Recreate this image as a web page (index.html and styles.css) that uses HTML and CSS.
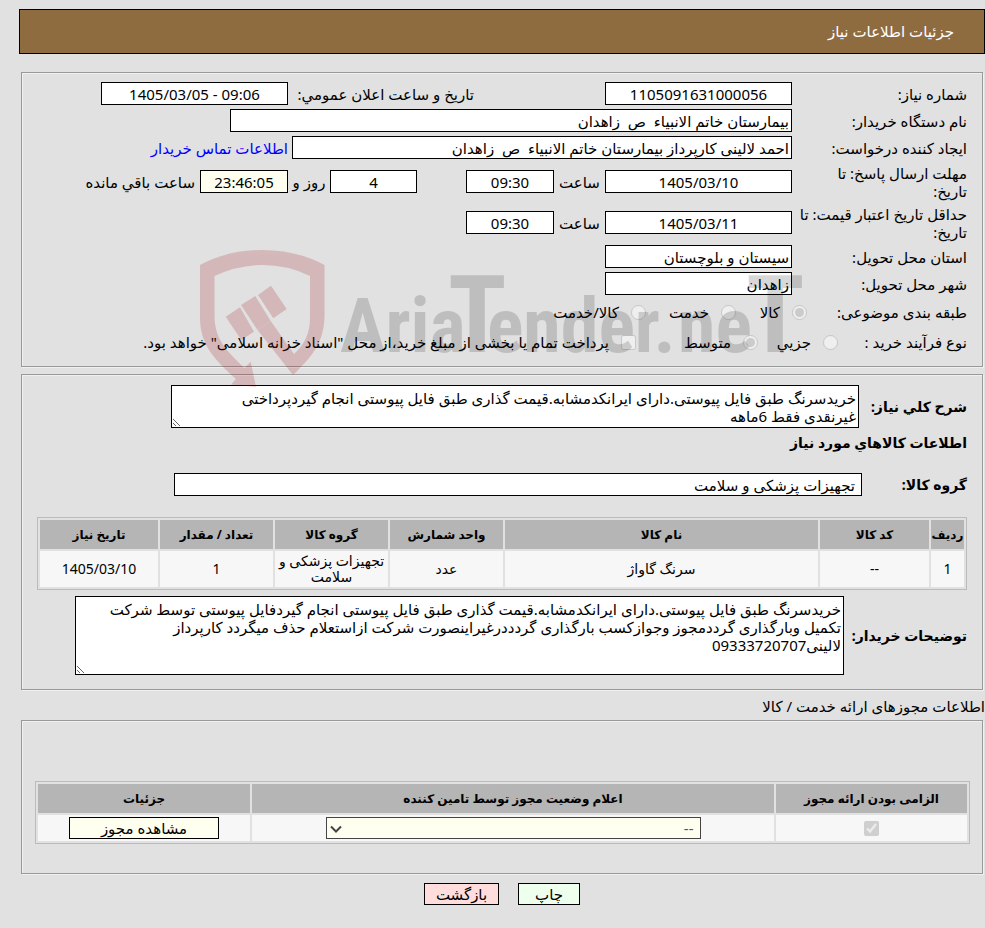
FILE: index.html
```
<!DOCTYPE html>
<html lang="fa" dir="rtl">
<head>
    <meta charset="UTF-8">
    <meta name="viewport" content="width=device-width, initial-scale=1.0">
    <title>جزئیات اطلاعات نیاز</title>
    <link rel="stylesheet" href="styles.css">
</head>
<body>
    <svg class="watermark" viewBox="180 235 640 160" aria-hidden="true">
        <g class="mark-red">
            <path d="M200 265 Q228 250 262 250 Q297 250 324.500 265 V315 C324.500 342 312 357 293 375 L257.500 330 L270.700 321 L294 354 C304 345 310 334 310 318 V276 Q288 265 262 265 Q238 265 214.500 276 V317 C215 341 229 353 244.500 368 L250.700 361.700 L256 387 L231 384.500 L236 379 C215 360 200 345 200 318 Z"/>
            <path d="M225.700 316.700 L240 307.300 L254 331.700 L241.300 340 Z M241 305 L255.300 296 L270.700 321 L257.500 330 Z M258 295 L271 285.700 L286.700 309 L273.300 318.300 Z"/>
        </g>
        <text class="mark-text" direction="ltr" x="340" y="352">Aria<tspan class="mark-big" x="448">T</tspan><tspan x="487">ender.</tspan><tspan x="678">ne</tspan><tspan class="mark-big" x="746">T</tspan></text>
    </svg>

    <div class="page">
        <h1 class="title">جزئیات اطلاعات نیاز</h1>

        <fieldset class="box info">
            <div class="row">
                <label class="name" for="number">شماره نیاز:</label>
                <input class="center w-date" id="number" value="1105091631000056" readonly>
                <label class="public" for="public">تاریخ و ساعت اعلان عمومي:</label>
                <input class="center w-date" id="public" value="1405/03/05 - 09:06" dir="ltr" readonly>
            </div>
            <div class="row">
                <label class="name" for="buyer">نام دستگاه خریدار:</label>
                <input class="w-buyer" id="buyer" value="بیمارستان خاتم الانبیاء  ص  زاهدان" readonly>
            </div>
            <div class="row">
                <label class="name" for="creator">ایجاد کننده درخواست:</label>
                <input class="w-creator" id="creator" value="احمد لالینی کارپرداز بیمارستان خاتم الانبیاء  ص  زاهدان" readonly>
                <a class="contact" href="#">اطلاعات تماس خریدار</a>
            </div>
            <div class="row two-line">
                <label class="name" for="reply-date">مهلت ارسال پاسخ: تا<br>تاریخ:</label>
                <input class="center w-date" id="reply-date" value="1405/03/10" readonly>
                <label class="hour" for="reply-hour">ساعت</label>
                <input class="center w-hour" id="reply-hour" value="09:30" readonly>
                <input class="center days" id="days" value="4" readonly>
                <label class="and" for="days">روز و</label>
                <input class="center w-hour cream" id="left" value="23:46:05" readonly>
                <label class="left" for="left">ساعت باقي مانده</label>
            </div>
            <div class="row two-line">
                <label class="name" for="price-date">حداقل تاریخ اعتبار قیمت: تا<br>تاریخ:</label>
                <input class="center w-date" id="price-date" value="1405/03/11" readonly>
                <label class="hour" for="price-hour">ساعت</label>
                <input class="center w-hour" id="price-hour" value="09:30" readonly>
            </div>
            <div class="row">
                <label class="name" for="province">استان محل تحویل:</label>
                <input class="w-date" id="province" value="سیستان و بلوچستان" readonly>
            </div>
            <div class="row">
                <label class="name" for="city">شهر محل تحویل:</label>
                <input class="w-date" id="city" value="زاهدان" readonly>
            </div>
            <div class="choices kinds">
                <span class="caption">طبقه بندی موضوعی:</span>
                <label><input type="radio" name="kind" checked disabled>کالا</label>
                <label><input type="radio" name="kind" disabled>خدمت</label>
                <label><input type="radio" name="kind" disabled>کالا/خدمت</label>
            </div>
            <div class="choices process">
                <span class="caption">نوع فرآیند خرید :</span>
                <label><input type="radio" name="process" disabled>جزیي</label>
                <label><input type="radio" name="process" checked disabled>متوسط</label>
                <label><input type="checkbox" disabled>پرداخت تمام یا بخشی از مبلغ خرید،از محل "اسناد خزانه اسلامی" خواهد بود.</label>
            </div>
        </fieldset>

        <fieldset class="box goods">
            <div class="row">
                <label class="strong" for="summary">شرح کلي نیاز:</label>
                <textarea class="w-wide short" id="summary" readonly>خریدسرنگ طبق فایل پیوستی.دارای ایرانکدمشابه.قیمت گذاری طبق فایل پیوستی انجام گیردپرداختی
غیرنقدی فقط 6ماهه</textarea>
            </div>
            <h2 class="heading">اطلاعات کالاهاي مورد نیاز</h2>
            <div class="row">
                <label class="strong narrow" for="group">گروه کالا:</label>
                <input class="w-wide group" id="group" value="تجهیزات پزشکی و سلامت" readonly>
            </div>
            <table class="grid items">
                <colgroup>
                    <col class="c-row"><col class="c-code"><col><col class="c-unit"><col class="c-unit"><col class="c-unit"><col class="c-date">
                </colgroup>
                <thead>
                    <tr><th>ردیف</th><th>کد کالا</th><th>نام کالا</th><th>واحد شمارش</th><th>گروه کالا</th><th>تعداد / مقدار</th><th>تاریخ نیاز</th></tr>
                </thead>
                <tbody>
                    <tr><td>1</td><td>--</td><td>سرنگ گاواژ</td><td>عدد</td><td>تجهیزات پزشکی و سلامت</td><td>1</td><td>1405/03/10</td></tr>
                </tbody>
            </table>
            <div class="row">
                <label class="strong wide" for="notes">توضیحات خریدار:</label>
                <textarea class="w-notes tall" id="notes" readonly>خریدسرنگ طبق فایل پیوستی.دارای ایرانکدمشابه.قیمت گذاری طبق فایل پیوستی انجام گیردفایل پیوستی توسط شرکت
تکمیل وبارگذاری گرددمجوز وجوازکسب بارگذاری گردددرغیراینصورت شرکت ازاستعلام حذف میگردد کارپرداز
لالینی09333720707</textarea>
            </div>
        </fieldset>

        <h2 class="permits-title">اطلاعات مجوزهای ارائه خدمت / کالا</h2>

        <fieldset class="box permits">
            <table class="grid">
                <colgroup>
                    <col class="c-must"><col><col class="c-detail">
                </colgroup>
                <thead>
                    <tr><th>الزامی بودن ارائه مجوز</th><th>اعلام وضعیت مجوز توسط تامین کننده</th><th>جزئیات</th></tr>
                </thead>
                <tbody>
                    <tr>
                        <td><input type="checkbox" aria-label="الزامی بودن ارائه مجوز" checked disabled></td>
                        <td><div class="select"><select aria-label="اعلام وضعیت مجوز توسط تامین کننده" disabled><option>--</option></select><svg viewBox="0 0 12 8" width="12" height="8"><path d="M1 1.500 L6 6.500 L11 1.500"/></svg></div></td>
                        <td><button class="view" type="button">مشاهده مجوز</button></td>
                    </tr>
                </tbody>
            </table>
        </fieldset>

        <div class="actions">
            <button class="print" type="button">چاپ</button>
            <button class="back" type="button">بازگشت</button>
        </div>
    </div>
</body>
</html>
```
FILE: styles.css
```
* {
    box-sizing: border-box;
}

body {
    margin: 0;
    background-color: #e1e1e1;
    color: #000;
}

body,
input,
select,
textarea,
button {
    font-family: "Noto Sans", "DejaVu Sans", sans-serif;
    font-size: 15px;
    line-height: 18px;
}

.page {
    padding: 9px 0 20px 19px;
}

.title {
    margin: 0 0 18px;
    padding: 13px 30px;
    border: 1px solid #000;
    background-color: #8f6c40;
    color: #fff;
    font-size: 15px;
    font-weight: normal;
    line-height: 17px;
}

.box {
    min-width: 0;
    margin: 0 2px;
    border: 1px solid #999;
    box-shadow: inset 1px 1px #f0f0f0, 1px 1px #f0f0f0;
}

.info {
    display: flex;
    flex-direction: column;
    gap: 4px;
    margin-bottom: 7px;
    padding: 9px 15px 11px;
}

.row {
    display: flex;
    align-items: center;
}

.two-line {
    height: 37px;
}

.name {
    flex: none;
    width: 175px;
    white-space: nowrap;
}

input:not([type]),
textarea {
    border: 1px solid #000;
    border-radius: 0;
    background-color: #fff;
    color: #000;
    outline: none;
}

input:not([type]) {
    height: 23px;
    padding: 0 2px;
}

.center {
    text-align: center;
}

.w-date {
    width: 187px;
}

.w-buyer {
    width: 562px;
}

.w-creator {
    width: 500px;
}

.w-hour {
    width: 88px;
}

.public {
    width: 186px;
    margin-right: 131px;
    white-space: nowrap;
}

.contact {
    margin-right: 4px;
    color: #00f;
    text-decoration: none;
}

.hour {
    width: 51px;
    text-align: center;
}

.days {
    width: 87px;
    margin-right: 49px;
}

.and {
    width: 42px;
    text-align: center;
}

.left {
    margin-right: 5px;
}

.row .cream {
    background-color: #fffff0;
}

.choices {
    display: flex;
    align-items: center;
    height: 26px;
}

.caption {
    flex: none;
    width: 160px;
}

.process .caption {
    width: 129px;
}

.choices label {
    display: flex;
    align-items: center;
    gap: 12px;
    flex: none;
    white-space: nowrap;
}

.choices label:nth-child(2) {
    width: 71px;
}

.choices label:nth-child(3) {
    width: 90px;
}

.process label:nth-child(2) {
    width: 80px;
}

.process label:nth-child(3) {
    width: 122px;
}

input[type="radio"],
input[type="checkbox"] {
    width: 15px;
    height: 15px;
    margin: 0;
}

.goods {
    padding: 10px 15px 14px;
}

.strong {
    flex: none;
    width: 108px;
    font-size: 14px;
    font-weight: bold;
    white-space: nowrap;
}

.narrow {
    width: 105px;
}

.wide {
    width: 123px;
}

textarea {
    padding: 3px 2px;
    overflow: hidden;
    white-space: pre;
}

.w-wide {
    width: 688px;
}

.w-notes {
    width: 769px;
}

.short {
    height: 43px;
}

.tall {
    height: 79px;
}

.heading {
    margin: 6px 0 21px;
    font-size: 14px;
    line-height: 18px;
}

.row .group {
    padding: 0 6px;
}

.grid {
    width: 100%;
    border: 1px solid #bbb;
    border-spacing: 2px;
    table-layout: fixed;
    text-align: center;
}

.grid th {
    height: 29px;
    padding: 0;
    background-color: #b5b5b5;
    font-size: 12px;
    line-height: 16px;
    white-space: nowrap;
}

.grid td {
    padding: 2px;
    background-color: #f7f7f7;
    font-size: 14px;
    line-height: 16px;
}

.items {
    margin: 21px 0 6px;
}

.c-row {
    width: 33px;
}

.c-code {
    width: 109px;
}

.c-unit {
    width: 113px;
}

.c-date {
    width: 118px;
}

.permits-title {
    margin: 7px 0 5px;
    font-size: 15px;
    font-weight: normal;
    line-height: 18px;
}

.permits {
    padding: 60px 12px 29px 13px;
}

.c-must {
    width: 191px;
}

.c-detail {
    width: 212px;
}

.permits input {
    display: block;
    margin: 0 auto;
}

.select {
    position: relative;
    width: 375px;
    max-width: 100%;
    margin: 0 auto;
}

.select select {
    display: block;
    appearance: none;
    width: 100%;
    height: 22px;
    padding: 0 6px;
    border: 1px solid #444;
    border-radius: 0;
    background-color: #fffff0;
    color: #555;
    opacity: 1;
}

.select svg {
    position: absolute;
    top: 8px;
    left: 4px;
    fill: none;
    stroke: #444;
    stroke-width: 2;
}

button {
    display: block;
    height: 22px;
    padding: 0;
    border: 1px solid #000;
    color: #000;
}

.view {
    width: 150px;
    margin: 0 auto;
    background-color: #fffff0;
}

.actions {
    display: flex;
    justify-content: center;
    gap: 19px;
    margin-top: 9px;
}

.print {
    width: 62px;
    background-color: #efe;
}

.back {
    width: 75px;
    background-color: #fdd;
}

/* logo laid over the form */
.watermark {
    position: absolute;
    top: 235px;
    left: 180px;
    width: 640px;
    height: 160px;
    pointer-events: none;
}

.mark-red {
    fill: rgb(165, 25, 30);
    opacity: 0.2;
}

.mark-text {
    fill: #000;
    opacity: 0.15;
    font-family: "Liberation Sans Narrow", "Roboto Condensed", Roboto, sans-serif;
    font-size: 76px;
    font-weight: bold;
}

.mark-big {
    font-size: 108px;
}
```
